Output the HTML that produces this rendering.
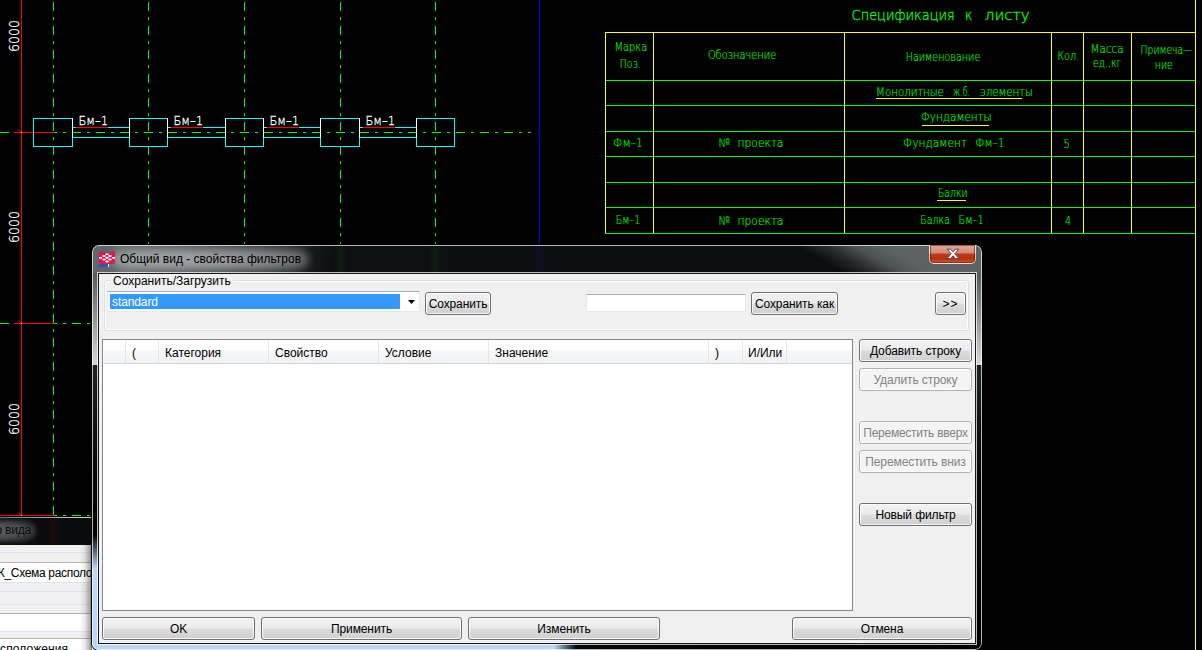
<!DOCTYPE html><html lang="ru"><head><meta charset="utf-8"><title>Общий вид - свойства фильтров</title><style>
html,body{margin:0;padding:0;background:#000;}
body{width:1202px;height:650px;overflow:hidden;position:relative;font-family:"Liberation Sans",sans-serif;font-size:12px;color:#000;}
.abs{position:absolute;}
/* background panel (bottom-left) */
#panel{position:absolute;left:0;top:517px;width:600px;height:133px;overflow:hidden;}
#panel .tb{position:absolute;left:0;top:0;width:600px;height:28px;background:linear-gradient(to right,#6f6f6f 0px,#d6d6d6 90px,#d6d6d6 600px) top left/600px 1px no-repeat,#0a0b0d;padding-top:1px;box-sizing:border-box;}
#panel .glow{position:absolute;left:-36px;top:3px;width:72px;height:22px;border-radius:11px;background:radial-gradient(ellipse at center,rgba(255,255,255,.36) 0%,rgba(255,255,255,.26) 50%,rgba(255,255,255,0) 100%);filter:blur(2px);}
#panel .tt{position:absolute;left:-4.5px;top:6px;font-size:12px;color:#0a0c14;letter-spacing:-0.2px;white-space:nowrap;}
#panel .body{position:absolute;left:0;top:28px;width:600px;height:105px;background:#f0f0f0;}
#panel .row{position:absolute;left:0;width:600px;background:#fff;}
#panel .ln{position:absolute;left:0;width:600px;height:1px;background:#dbe5ef;}
#panel .lg{position:absolute;left:0;width:600px;height:1px;background:#b4b4b8;}
#panel .txt{position:absolute;white-space:nowrap;font-size:12px;color:#000;}
#pshadow{position:absolute;left:80px;top:540px;width:12px;height:110px;background:linear-gradient(to right,rgba(0,0,0,0) 0%,rgba(0,0,0,.08) 40%,rgba(0,0,0,.3) 80%,rgba(0,0,0,.55) 100%);}
/* dialog */
#dlg{position:absolute;left:92px;top:245px;width:890px;height:405px;border-radius:7px;overflow:hidden;background:#0b0d10;box-shadow:0 0 0 1px #000;}
#dlg .fr{position:absolute;}
#client{position:absolute;left:7px;top:29px;width:876px;height:369px;background:#f0f0f0;box-shadow:0 0 0 1px #16181a,0 0 0 2px rgba(255,255,255,.72);}
.btn{position:absolute;box-sizing:border-box;height:23px;border:1px solid #707070;border-radius:3px;background:linear-gradient(to bottom,#f2f2f2 0%,#ebebeb 48%,#dddddd 52%,#cfcfcf 100%);box-shadow:inset 0 0 0 1px rgba(255,255,255,.85);text-align:center;line-height:22px;font-size:12px;white-space:nowrap;color:#000;letter-spacing:-0.1px;}
.btn.dis{border-color:#adb2b5;background:#f4f4f4;color:#838383;box-shadow:inset 0 0 0 1px #fcfcfc;}
.hd{position:absolute;top:1px;height:23px;line-height:24px;font-size:12px;white-space:nowrap;}
.sep{position:absolute;top:0;width:1px;height:23px;background:linear-gradient(to bottom,#e9ebed,#dfe2e6);}
</style></head><body>
<svg id="cad" width="1202" height="650" viewBox="0 0 1202 650" style="position:absolute;left:0;top:0" shape-rendering="crispEdges" font-family="'DejaVu Sans', 'Liberation Sans', sans-serif" font-weight="200">
<rect width="1202" height="650" fill="#000"/>
<line x1="53.5" y1="2" x2="53.5" y2="515.5" stroke="#00ff00" stroke-width="1" stroke-dasharray="9 6 3 6"/>
<line x1="148.5" y1="2" x2="148.5" y2="250" stroke="#00ff00" stroke-width="1" stroke-dasharray="9 6 3 6"/>
<line x1="244.5" y1="2" x2="244.5" y2="250" stroke="#00ff00" stroke-width="1" stroke-dasharray="9 6 3 6"/>
<line x1="340.5" y1="2" x2="340.5" y2="250" stroke="#00ff00" stroke-width="1" stroke-dasharray="9 6 3 6"/>
<line x1="435.5" y1="2" x2="435.5" y2="250" stroke="#00ff00" stroke-width="1" stroke-dasharray="9 6 3 6"/>
<line x1="0" y1="132.5" x2="531" y2="132.5" stroke="#00ff00" stroke-width="1" stroke-dasharray="9 6 3 6"/>
<line x1="0" y1="323.5" x2="100" y2="323.5" stroke="#00ff00" stroke-width="1" stroke-dasharray="9 6 3 6"/>
<line x1="48" y1="515.5" x2="100" y2="515.5" stroke="#00ff00" stroke-width="1" stroke-dasharray="9 6 3 6"/>
<line x1="14" y1="132.5" x2="53.5" y2="132.5" stroke="#000" stroke-width="1"/>
<line x1="14" y1="132.5" x2="53.5" y2="132.5" stroke="#ff0000" stroke-width="1"/>
<line x1="14" y1="323.5" x2="53.5" y2="323.5" stroke="#000" stroke-width="1"/>
<line x1="14" y1="323.5" x2="53.5" y2="323.5" stroke="#ff0000" stroke-width="1"/>
<line x1="0" y1="515.5" x2="53.5" y2="515.5" stroke="#000" stroke-width="1"/>
<line x1="0" y1="515.5" x2="53.5" y2="515.5" stroke="#ff0000" stroke-width="1"/>
<line x1="21.5" y1="0" x2="21.5" y2="516" stroke="#ff0000" stroke-width="1"/>
<line x1="18.5" y1="129.5" x2="21.5" y2="132.5" stroke="#ff0000" stroke-width="1" shape-rendering="auto"/>
<rect x="21" y="132.0" width="1" height="1" fill="#fff"/>
<line x1="18.5" y1="320.5" x2="21.5" y2="323.5" stroke="#ff0000" stroke-width="1" shape-rendering="auto"/>
<rect x="21" y="323.0" width="1" height="1" fill="#fff"/>
<line x1="18.5" y1="512.5" x2="21.5" y2="515.5" stroke="#ff0000" stroke-width="1" shape-rendering="auto"/>
<rect x="21" y="515.0" width="1" height="1" fill="#fff"/>
<line x1="539.5" y1="0" x2="539.5" y2="250" stroke="#0000ff" stroke-width="1.3"/>
<rect x="33.5" y="118.5" width="39" height="28" fill="none" stroke="#00ffff" stroke-width="1"/>
<rect x="129.5" y="118.5" width="38" height="28" fill="none" stroke="#00ffff" stroke-width="1"/>
<rect x="225.5" y="118.5" width="38" height="28" fill="none" stroke="#00ffff" stroke-width="1"/>
<rect x="320.5" y="118.5" width="39" height="28" fill="none" stroke="#00ffff" stroke-width="1"/>
<rect x="416.5" y="118.5" width="38" height="28" fill="none" stroke="#00ffff" stroke-width="1"/>
<line x1="72.5" y1="127.5" x2="129.5" y2="127.5" stroke="#00ffff" stroke-width="1"/>
<line x1="72.5" y1="137.5" x2="129.5" y2="137.5" stroke="#00ffff" stroke-width="1"/>
<line x1="72.5" y1="118" x2="72.5" y2="138" stroke="#ffffff" stroke-width="1"/>
<line x1="129.5" y1="118" x2="129.5" y2="138" stroke="#ffffff" stroke-width="1"/>
<line x1="76.0" y1="127.5" x2="108.0" y2="127.5" stroke="#ff0000" stroke-width="1"/>
<text x="78.5" y="124.7" font-size="12.5" fill="#ffffff" stroke="#ffffff" stroke-width="0.3" textLength="29.5" lengthAdjust="spacingAndGlyphs" shape-rendering="auto">Бм–1</text>
<line x1="167.5" y1="127.5" x2="225.5" y2="127.5" stroke="#00ffff" stroke-width="1"/>
<line x1="167.5" y1="137.5" x2="225.5" y2="137.5" stroke="#00ffff" stroke-width="1"/>
<line x1="167.5" y1="118" x2="167.5" y2="138" stroke="#ffffff" stroke-width="1"/>
<line x1="225.5" y1="118" x2="225.5" y2="138" stroke="#ffffff" stroke-width="1"/>
<line x1="171.0" y1="127.5" x2="203.0" y2="127.5" stroke="#ff0000" stroke-width="1"/>
<text x="173.5" y="124.7" font-size="12.5" fill="#ffffff" stroke="#ffffff" stroke-width="0.3" textLength="29.5" lengthAdjust="spacingAndGlyphs" shape-rendering="auto">Бм–1</text>
<line x1="263.5" y1="127.5" x2="320.5" y2="127.5" stroke="#00ffff" stroke-width="1"/>
<line x1="263.5" y1="137.5" x2="320.5" y2="137.5" stroke="#00ffff" stroke-width="1"/>
<line x1="263.5" y1="118" x2="263.5" y2="138" stroke="#ffffff" stroke-width="1"/>
<line x1="320.5" y1="118" x2="320.5" y2="138" stroke="#ffffff" stroke-width="1"/>
<line x1="267.0" y1="127.5" x2="299.0" y2="127.5" stroke="#ff0000" stroke-width="1"/>
<text x="269.5" y="124.7" font-size="12.5" fill="#ffffff" stroke="#ffffff" stroke-width="0.3" textLength="29.5" lengthAdjust="spacingAndGlyphs" shape-rendering="auto">Бм–1</text>
<line x1="359.5" y1="127.5" x2="416.5" y2="127.5" stroke="#00ffff" stroke-width="1"/>
<line x1="359.5" y1="137.5" x2="416.5" y2="137.5" stroke="#00ffff" stroke-width="1"/>
<line x1="359.5" y1="118" x2="359.5" y2="138" stroke="#ffffff" stroke-width="1"/>
<line x1="416.5" y1="118" x2="416.5" y2="138" stroke="#ffffff" stroke-width="1"/>
<line x1="363.0" y1="127.5" x2="395.0" y2="127.5" stroke="#ff0000" stroke-width="1"/>
<text x="365.5" y="124.7" font-size="12.5" fill="#ffffff" stroke="#ffffff" stroke-width="0.3" textLength="29.5" lengthAdjust="spacingAndGlyphs" shape-rendering="auto">Бм–1</text>
<text transform="translate(19.3,36) rotate(-90)" text-anchor="middle" font-size="13.5" fill="#ffffff" stroke="#ffffff" stroke-width="0.3" textLength="32" lengthAdjust="spacingAndGlyphs">6000</text>
<text transform="translate(19.3,227) rotate(-90)" text-anchor="middle" font-size="13.5" fill="#ffffff" stroke="#ffffff" stroke-width="0.3" textLength="32" lengthAdjust="spacingAndGlyphs">6000</text>
<text transform="translate(19.3,419) rotate(-90)" text-anchor="middle" font-size="13.5" fill="#ffffff" stroke="#ffffff" stroke-width="0.3" textLength="32" lengthAdjust="spacingAndGlyphs">6000</text>
<text x="851.6" y="20" font-size="14.5" fill="#00ff00" stroke="#00ff00" stroke-width="0.3" textLength="103.2" lengthAdjust="spacingAndGlyphs">Спецификация</text>
<text x="965" y="20" font-size="14.5" fill="#00ff00" stroke="#00ff00" stroke-width="0.3" textLength="7.3" lengthAdjust="spacingAndGlyphs">к</text>
<text x="984.8" y="20" font-size="14.5" fill="#00ff00" stroke="#00ff00" stroke-width="0.3" textLength="44.9" lengthAdjust="spacingAndGlyphs">листу</text>
<line x1="605" y1="80.5" x2="1196" y2="80.5" stroke="#00ff00" stroke-width="1"/>
<line x1="605" y1="105.5" x2="1196" y2="105.5" stroke="#00ff00" stroke-width="1"/>
<line x1="605" y1="131.5" x2="1196" y2="131.5" stroke="#00ff00" stroke-width="1"/>
<line x1="605" y1="156.5" x2="1196" y2="156.5" stroke="#00ff00" stroke-width="1"/>
<line x1="605" y1="182.5" x2="1196" y2="182.5" stroke="#00ff00" stroke-width="1"/>
<line x1="605" y1="207.5" x2="1196" y2="207.5" stroke="#00ff00" stroke-width="1"/>
<line x1="605" y1="233.5" x2="1196" y2="233.5" stroke="#00ff00" stroke-width="1"/>
<line x1="605.5" y1="32" x2="605.5" y2="233" stroke="#ffff00" stroke-width="1"/>
<line x1="653.5" y1="32" x2="653.5" y2="233" stroke="#ffff00" stroke-width="1"/>
<line x1="844.5" y1="32" x2="844.5" y2="233" stroke="#ffff00" stroke-width="1"/>
<line x1="1051.5" y1="32" x2="1051.5" y2="233" stroke="#ffff00" stroke-width="1"/>
<line x1="1083.5" y1="32" x2="1083.5" y2="233" stroke="#ffff00" stroke-width="1"/>
<line x1="1131.5" y1="32" x2="1131.5" y2="233" stroke="#ffff00" stroke-width="1"/>
<line x1="605" y1="32.5" x2="1196" y2="32.5" stroke="#ffff00" stroke-width="1"/>
<line x1="1195.5" y1="0" x2="1195.5" y2="650" stroke="#ffff00" stroke-width="1"/>
<text x="614.5" y="50.8" font-size="11.5" fill="#00e600" stroke="#00e600" stroke-width="0.2" textLength="32.8" lengthAdjust="spacingAndGlyphs">Марка</text>
<text x="619.7" y="67.6" font-size="11.5" fill="#00e600" stroke="#00e600" stroke-width="0.2" textLength="21.1" lengthAdjust="spacingAndGlyphs">Поз.</text>
<text x="707.9" y="58.6" font-size="11.5" fill="#00e600" stroke="#00e600" stroke-width="0.2" textLength="68.3" lengthAdjust="spacingAndGlyphs">Обозначение</text>
<text x="905.7" y="61.2" font-size="11.5" fill="#00e600" stroke="#00e600" stroke-width="0.2" textLength="74.6" lengthAdjust="spacingAndGlyphs">Наименование</text>
<text x="1057.5" y="60.2" font-size="11.5" fill="#00e600" stroke="#00e600" stroke-width="0.2" textLength="22.0" lengthAdjust="spacingAndGlyphs">Кол.</text>
<text x="1090.6" y="52.7" font-size="11.5" fill="#00e600" stroke="#00e600" stroke-width="0.2" textLength="33.1" lengthAdjust="spacingAndGlyphs">Масса</text>
<text x="1093" y="66.6" font-size="11.5" fill="#00e600" stroke="#00e600" stroke-width="0.2" textLength="28" lengthAdjust="spacingAndGlyphs">ед.,кг</text>
<text x="1140.6" y="53.6" font-size="11.5" fill="#00e600" stroke="#00e600" stroke-width="0.2" textLength="51.8" lengthAdjust="spacingAndGlyphs">Примеча—</text>
<text x="1154.8" y="68.7" font-size="11.5" fill="#00e600" stroke="#00e600" stroke-width="0.2" textLength="18.0" lengthAdjust="spacingAndGlyphs">ние</text>
<text x="876.1" y="96.2" font-size="11.5" fill="#00e600" stroke="#00e600" stroke-width="0.2" textLength="67.8" lengthAdjust="spacingAndGlyphs">Монолитные</text>
<text x="953" y="96.2" font-size="11.5" fill="#00e600" stroke="#00e600" stroke-width="0.2" textLength="17" lengthAdjust="spacingAndGlyphs">ж.б.</text>
<text x="980" y="96.2" font-size="11.5" fill="#00e600" stroke="#00e600" stroke-width="0.2" textLength="52.8" lengthAdjust="spacingAndGlyphs">элементы</text>
<line x1="876" y1="98.5" x2="1022" y2="98.5" stroke="#ffff00" stroke-width="1"/>
<text x="920.7" y="120.7" font-size="11.5" fill="#00e600" stroke="#00e600" stroke-width="0.2" textLength="70.9" lengthAdjust="spacingAndGlyphs">Фундаменты</text>
<line x1="922" y1="125.5" x2="989" y2="125.5" stroke="#ffff00" stroke-width="1"/>
<text x="613" y="147.3" font-size="11.5" fill="#00e600" stroke="#00e600" stroke-width="0.2" textLength="30" lengthAdjust="spacingAndGlyphs">Фм–1</text>
<text x="718.5" y="147.3" font-size="11.5" fill="#00e600" stroke="#00e600" stroke-width="0.2" textLength="11.5" lengthAdjust="spacingAndGlyphs">№</text>
<text x="737.5" y="147.3" font-size="11.5" fill="#00e600" stroke="#00e600" stroke-width="0.2" textLength="45.9" lengthAdjust="spacingAndGlyphs">проекта</text>
<text x="902.9" y="146.8" font-size="11.5" fill="#00e600" stroke="#00e600" stroke-width="0.2" textLength="64.1" lengthAdjust="spacingAndGlyphs">Фундамент</text>
<text x="975.3" y="146.8" font-size="11.5" fill="#00e600" stroke="#00e600" stroke-width="0.2" textLength="29.2" lengthAdjust="spacingAndGlyphs">Фм–1</text>
<text x="1063.6" y="148" font-size="11.5" fill="#00e600" stroke="#00e600" stroke-width="0.2" textLength="6.4" lengthAdjust="spacingAndGlyphs">5</text>
<text x="938" y="197" font-size="11.5" fill="#00e600" stroke="#00e600" stroke-width="0.2" textLength="29.5" lengthAdjust="spacingAndGlyphs">Балки</text>
<line x1="937" y1="200.5" x2="966" y2="200.5" stroke="#ffff00" stroke-width="1"/>
<text x="615.7" y="224.3" font-size="11.5" fill="#00e600" stroke="#00e600" stroke-width="0.2" textLength="24.7" lengthAdjust="spacingAndGlyphs">Бм–1</text>
<text x="718.5" y="224.5" font-size="11.5" fill="#00e600" stroke="#00e600" stroke-width="0.2" textLength="11.5" lengthAdjust="spacingAndGlyphs">№</text>
<text x="737.5" y="224.5" font-size="11.5" fill="#00e600" stroke="#00e600" stroke-width="0.2" textLength="45.9" lengthAdjust="spacingAndGlyphs">проекта</text>
<text x="920.3" y="223.7" font-size="11.5" fill="#00e600" stroke="#00e600" stroke-width="0.2" textLength="29.7" lengthAdjust="spacingAndGlyphs">Балка</text>
<text x="958.6" y="223.7" font-size="11.5" fill="#00e600" stroke="#00e600" stroke-width="0.2" textLength="25.2" lengthAdjust="spacingAndGlyphs">Бм–1</text>
<text x="1065" y="225" font-size="11.5" fill="#00e600" stroke="#00e600" stroke-width="0.2" textLength="6" lengthAdjust="spacingAndGlyphs">4</text>
</svg>
<div id="panel"><div class="tb"><div class="fr abs" style="left:46px;top:0;width:14px;height:27px;background:linear-gradient(to right,rgba(255,0,0,0),rgba(200,0,0,.11),rgba(255,0,0,0))"></div><div class="glow"></div><div class="tt">о вида</div></div><div class="body">
<div class="ln" style="top:7px"></div>
<div class="lg" style="top:17px"></div><div class="row" style="top:18px;height:19px"></div><div class="ln" style="top:37px"></div>
<div class="ln" style="top:46px"></div>
<div class="ln" style="top:59px"></div>
<div class="lg" style="top:68px"></div><div class="row" style="top:69px;height:17px"></div><div class="ln" style="top:86px"></div>
<div class="lg" style="top:93px"></div><div class="row" style="top:94px;height:12px"></div>
<div id="t1" class="txt" style="left:-13px;top:21px;letter-spacing:-0.32px">КЖ_Схема расположения</div>
<div id="t2" class="txt" style="left:-13.5px;top:97px;letter-spacing:0.1px">расположения</div>
</div></div><div id="pshadow"></div>
<div id="dlg">
<div class="fr" style="left:0;top:0;width:890px;height:29px;background:linear-gradient(100deg,#60666a 0px,#5d6366 40px,#2b2e31 170px,#0d0f12 240px,#0b0d10 890px)"></div>
<div class="fr" style="left:242px;top:1px;width:13px;height:27px;background:linear-gradient(to right,rgba(0,200,0,0),rgba(0,200,0,.08),rgba(0,200,0,0))"></div>
<div class="fr" style="left:337px;top:1px;width:13px;height:27px;background:linear-gradient(to right,rgba(0,200,0,0),rgba(0,200,0,.08),rgba(0,200,0,0))"></div>
<div class="fr" style="left:441px;top:1px;width:13px;height:27px;background:linear-gradient(to right,rgba(0,0,255,0),rgba(0,0,255,.08),rgba(0,0,255,0))"></div>
<div class="fr" style="left:703px;top:0;width:400px;height:29px;transform-origin:0 0;transform:skewX(61deg);background:linear-gradient(to right,rgba(92,97,100,0) 0px,rgba(92,97,100,.35) 28px,rgba(92,97,100,.82) 58px,#5c6164 84px,#5e6366 400px)"></div>
<div class="fr" style="left:0;top:28px;width:7px;height:377px;background:linear-gradient(to bottom,#54595c 0px,#d6d6d6 92px,#1e2326 92px,#050607 200px,#000 262px,#bcd9f5 296px,#b9d7f5 377px)"></div>
<div class="fr" style="left:883px;top:28px;width:7px;height:377px;background:linear-gradient(to bottom,#54595c 0px,#d6d6d6 92px,#1e2326 92px,#050607 200px,#000 377px)"></div>
<div class="fr" style="left:0;top:398px;width:890px;height:7px;background:linear-gradient(to right,#b9d7f5 0px,#b9d7f5 462px,#05070a 484px,#000 890px)"></div>
<div class="fr" style="left:0;top:0;width:888px;height:403px;border:1px solid rgba(255,255,255,.7);border-radius:7px"></div>
<div class="fr" style="left:20px;top:3px;width:196px;height:23px;border-radius:11px;background:radial-gradient(ellipse at center,rgba(255,255,255,.5) 0%,rgba(255,255,255,.42) 60%,rgba(255,255,255,.1) 100%);filter:blur(4px)"></div>
<svg class="fr" style="left:7px;top:6px" width="16" height="16" viewBox="0 0 16 16"><path d="M0 1.4 C2 0.2 3.5 0.6 5 1.2 C8 2.2 12 1.6 16 -0.4 L16 12.4 C11 13.6 5 12.6 0 13.2 Z" fill="#e0184b"/><rect x="0" y="13" width="9" height="3" fill="#2a55c0"/><rect x="9" y="13" width="1" height="3" fill="#e8eefc"/><g fill="#fff"><rect x="0" y="6" width="3" height="1.6"/><rect x="13" y="6" width="3" height="1.6"/><ellipse cx="8" cy="3.2" rx="1.8" ry="1"/><ellipse cx="5" cy="5" rx="1.8" ry="1"/><ellipse cx="11" cy="5" rx="1.8" ry="1"/><ellipse cx="8" cy="6.8" rx="1.8" ry="1"/><ellipse cx="5" cy="8.6" rx="1.8" ry="1"/><ellipse cx="11" cy="8.6" rx="1.8" ry="1"/><ellipse cx="8" cy="10.4" rx="1.8" ry="1"/></g></svg>
<div id="ttl" class="fr" style="left:28px;top:7px;font-size:12px;white-space:nowrap;color:#000">Общий вид - свойства фильтров</div>
<div class="fr" style="left:837px;top:0;width:47px;height:19px;box-sizing:border-box;border:1px solid rgba(255,255,255,.65);border-top:none;border-radius:0 0 5px 5px;background:linear-gradient(to bottom,#e2a99b 0%,#d48674 45%,#c03a1a 50%,#b5300f 75%,#cf5a35 100%);box-shadow:inset 0 0 0 1px rgba(80,20,10,.55)"></div>
<svg class="fr" style="left:854px;top:3px" width="14" height="12" viewBox="0 0 14 12"><path d="M1.2 1.2 H4.6 L7 3.9 L9.4 1.2 H12.8 L8.8 5.8 L12.9 10.6 H9.4 L7 7.8 L4.6 10.6 H1.1 L5.2 5.8 Z" fill="#fff" stroke="#4a4a55" stroke-width="1" stroke-linejoin="round"/></svg>
<div id="client">
<div class="abs" style="left:5px;top:6px;width:865px;height:51px;box-sizing:border-box;border:1px solid #d5dfe5;border-radius:3px;box-shadow:inset 0 0 0 1px #fff"></div>
<div id="gl" class="abs" style="left:12px;top:0px;padding:0 2px;background:#f0f0f0;font-size:12px;line-height:14px;white-space:nowrap">Сохранить/Загрузить</div>
<div class="abs" style="left:8px;top:17px;width:313px;height:21px;box-sizing:border-box;background:#fff;border:1px solid #e3e9ef;border-top-color:#abadb3"></div>
<div id="sel" class="abs" style="left:11px;top:20px;width:290px;height:15px;background:#3399ff;color:#fff;font-size:12px;line-height:17px;white-space:nowrap;text-indent:2px;letter-spacing:-0.1px">standard</div>
<svg class="abs" style="left:309px;top:26px" width="7" height="4" viewBox="0 0 7 4"><path d="M0 0H7L3.5 4Z" fill="#000"/></svg>
<div class="btn" style="left:326px;top:18px;width:66px">Сохранить</div>
<div class="abs" style="left:487px;top:20px;width:160px;height:18px;box-sizing:border-box;background:#fff;border:1px solid #e3e9ef;border-top-color:#abadb3"></div>
<div class="btn" style="left:652px;top:18px;width:87px">Сохранить как</div>
<div class="btn" style="left:836px;top:18px;width:31px;letter-spacing:1px">&gt;&gt;</div>
<div class="abs" style="left:3px;top:65px;width:751px;height:272px;box-sizing:border-box;border:1px solid #828790;background:#fff">
<div class="abs" style="left:1px;top:1px;width:748px;height:22px;background:linear-gradient(to bottom,#ffffff 0%,#ffffff 42%,#f7f8fa 44%,#f1f2f4 100%);border-bottom:1px solid #d5d5d5"></div>
<div class="sep" style="left:22px"></div>
<div class="sep" style="left:55px"></div>
<div class="sep" style="left:165px"></div>
<div class="sep" style="left:275px"></div>
<div class="sep" style="left:385px"></div>
<div class="sep" style="left:605px"></div>
<div class="sep" style="left:639px"></div>
<div class="sep" style="left:683px"></div>
<div class="hd" style="left:29px">(</div>
<div class="hd" style="left:62px">Категория</div>
<div class="hd" style="left:172px">Свойство</div>
<div class="hd" style="left:282px">Условие</div>
<div class="hd" style="left:392px">Значение</div>
<div class="hd" style="left:612px">)</div>
<div class="hd" style="left:645px">И/Или</div>
</div>
<div class="btn" style="left:760px;top:65px;width:113px">Добавить строку</div>
<div class="btn dis" style="left:760px;top:94px;width:113px">Удалить строку</div>
<div class="btn dis" style="left:760px;top:147px;width:113px;letter-spacing:-0.25px">Переместить вверх</div>
<div class="btn dis" style="left:760px;top:176px;width:113px">Переместить вниз</div>
<div class="btn" style="left:760px;top:229px;width:113px">Новый фильтр</div>
<div class="btn" style="left:3px;top:343px;width:153px">OK</div>
<div class="btn" style="left:162px;top:343px;width:201px">Применить</div>
<div class="btn" style="left:369px;top:343px;width:192px">Изменить</div>
<div class="btn" style="left:693px;top:343px;width:180px">Отмена</div>
</div>
</div>
</body></html>
